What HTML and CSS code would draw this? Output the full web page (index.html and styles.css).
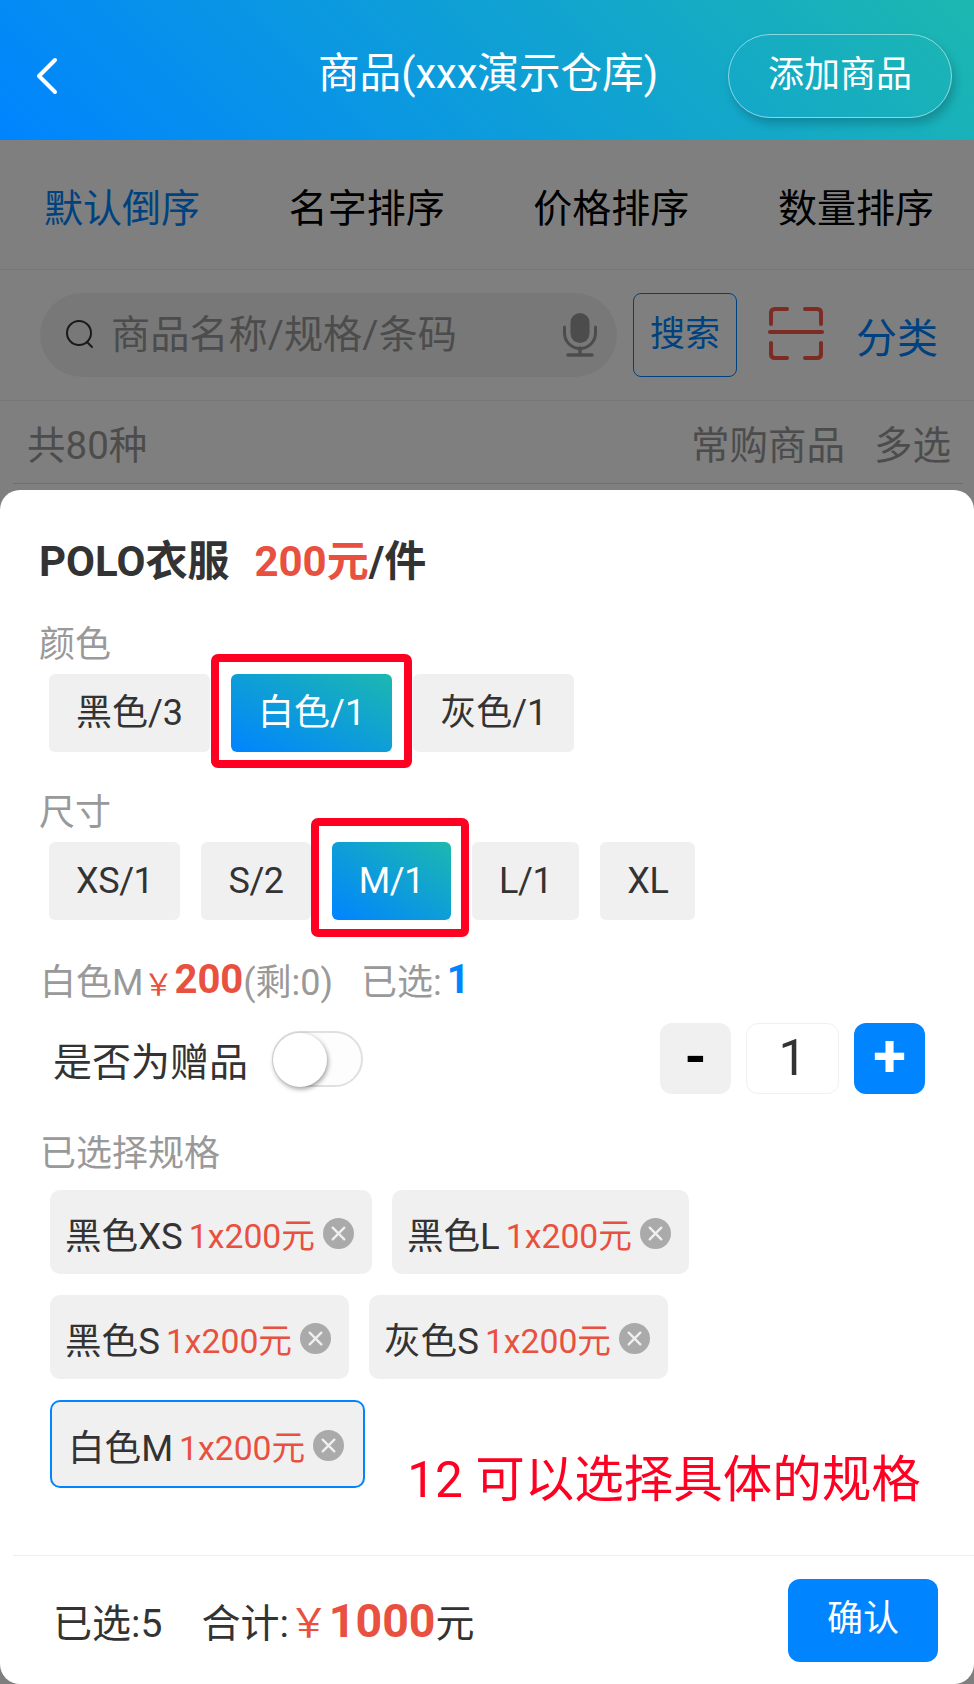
FILE: index.html
```html
<!DOCTYPE html>
<html lang="zh">
<head>
    <meta charset="UTF-8">
    <meta name="viewport" content="width=device-width, initial-scale=1.0">
    <title>商品</title>
    <link rel="stylesheet" href="styles.css">
</head>
<body>
    <div class="page">
        <div class="header">
            <svg class="back-icon" viewBox="0 0 26 38"><path d="M21 3 L5 19 L21 35" fill="none" stroke="#fff" stroke-width="4" stroke-linecap="round" stroke-linejoin="round"/></svg>
            <div class="header-title">商品(xxx演示仓库)</div>
            <div class="add-btn">添加商品</div>
        </div>

        <div class="sort-row">
            <span class="sort-item active">默认倒序</span>
            <span class="sort-item">名字排序</span>
            <span class="sort-item">价格排序</span>
            <span class="sort-item">数量排序</span>
        </div>

        <div class="search-row">
            <div class="search-box">
                <svg class="search-icon" viewBox="0 0 30 30"><circle cx="13" cy="13" r="12" fill="none" stroke="#333" stroke-width="2"/><path d="M21 22 L26 27" stroke="#333" stroke-width="2" stroke-linecap="round"/></svg>
                <span class="search-text">商品名称/规格/条码</span>
                <svg class="mic-icon" viewBox="0 0 34 44"><rect x="7.5" y="0" width="19" height="30" rx="9.5" fill="#999"/><path d="M1.5 14 V20 A15.5 15.5 0 0 0 32.5 20 V14" fill="none" stroke="#999" stroke-width="3" stroke-linecap="round"/><path d="M17 35 V42 M5 42 H29" stroke="#999" stroke-width="3.4" stroke-linecap="round"/></svg>
            </div>
            <div class="search-btn">搜索</div>
            <svg class="scan-icon" viewBox="0 0 56 53"><path d="M19 2 H7 Q3 2 3 6 V17 M37 2 H49 Q53 2 53 6 V17 M19 51 H7 Q3 51 3 47 V36 M37 51 H49 Q53 51 53 47 V36" fill="none" stroke="#f9564a" stroke-width="4" stroke-linecap="round"/><path d="M2 25 H54" stroke="#f9564a" stroke-width="4" stroke-linecap="round"/></svg>
            <span class="category">分类</span>
        </div>

        <div class="count-row">
            <span>共80种</span>
            <span class="count-links"><span>常购商品</span><span>多选</span></span>
        </div>

        <div class="mask"></div>

        <div class="sheet">
            <div class="goods-title">POLO衣服<span class="red title-price">200元</span>/件</div>

            <div class="spec-label">颜色</div>
            <div class="spec-row">
                <span class="spec">黑色/3</span>
                <span class="spec selected">白色/1<i class="mark mark-color"></i></span>
                <span class="spec">灰色/1</span>
            </div>

            <div class="spec-label size-label">尺寸</div>
            <div class="spec-row size-row">
                <span class="spec">XS/1</span>
                <span class="spec">S/2</span>
                <span class="spec selected">M/1<i class="mark mark-size"></i></span>
                <span class="spec">L/1</span>
                <span class="spec">XL</span>
            </div>

            <div class="stock-line">白色M<span class="red yen">￥</span><b class="red">200</b>(剩:0)<span class="picked">已选:</span><b class="blue picked-num">1</b></div>

            <div class="gift-row">
                <span class="gift-label">是否为赠品</span>
                <span class="switch"><i class="knob"></i></span>
                <div class="stepper">
                    <span class="step minus">-</span>
                    <span class="step-value">1</span>
                    <span class="step plus">+</span>
                </div>
            </div>

            <div class="spec-label chosen-label">已选择规格</div>
            <div class="chosen-list">
                <div class="chosen-row">
                    <span class="tag">黑色XS<span class="red tag-price">1x200元</span><svg class="tag-close" viewBox="0 0 32 32"><circle cx="16" cy="16" r="16" fill="#aaa"/><path d="M10 10 L22 22 M22 10 L10 22" stroke="#f0f0f0" stroke-width="2.4" stroke-linecap="round"/></svg></span>
                    <span class="tag">黑色L<span class="red tag-price">1x200元</span><svg class="tag-close" viewBox="0 0 32 32"><circle cx="16" cy="16" r="16" fill="#aaa"/><path d="M10 10 L22 22 M22 10 L10 22" stroke="#f0f0f0" stroke-width="2.4" stroke-linecap="round"/></svg></span>
                </div>
                <div class="chosen-row">
                    <span class="tag">黑色S<span class="red tag-price">1x200元</span><svg class="tag-close" viewBox="0 0 32 32"><circle cx="16" cy="16" r="16" fill="#aaa"/><path d="M10 10 L22 22 M22 10 L10 22" stroke="#f0f0f0" stroke-width="2.4" stroke-linecap="round"/></svg></span>
                    <span class="tag">灰色S<span class="red tag-price">1x200元</span><svg class="tag-close" viewBox="0 0 32 32"><circle cx="16" cy="16" r="16" fill="#aaa"/><path d="M10 10 L22 22 M22 10 L10 22" stroke="#f0f0f0" stroke-width="2.4" stroke-linecap="round"/></svg></span>
                </div>
                <div class="chosen-row">
                    <span class="tag current">白色M<span class="red tag-price">1x200元</span><svg class="tag-close" viewBox="0 0 32 32"><circle cx="16" cy="16" r="16" fill="#aaa"/><path d="M10 10 L22 22 M22 10 L10 22" stroke="#f0f0f0" stroke-width="2.4" stroke-linecap="round"/></svg></span>
                    <span class="note">12 可以选择具体的规格</span>
                </div>
            </div>

            <div class="footer">
                <span class="footer-count">已选:5</span>
                <span class="footer-total">合计:<span class="red total-yen">￥</span><b class="red">1000</b>元</span>
                <span class="confirm">确认</span>
            </div>
        </div>
    </div>
</body>
</html>
```

FILE: styles.css
```css
* {
    box-sizing: border-box;
}
body {
    margin: 0;
    background-color: #fff;
    color: #333;
    font-family: Roboto, "Noto Sans CJK SC", sans-serif;
    overflow: hidden;
}
.page {
    position: relative;
    width: 974px;
    height: 1684px;
    overflow: hidden;
}
.red {
    color: #e8503f;
}
.blue {
    color: #0084ff;
}

/* header */
.header {
    position: relative;
    z-index: 2;
    height: 140px;
    padding: 34px 22px 0 34px;
    display: flex;
    align-items: flex-start;
    background: linear-gradient(45deg, #0084ff, #1cb8b0);
    color: #fff;
}
.back-icon {
    width: 26px;
    height: 38px;
    margin-top: 23px;
}
.header-title {
    margin-left: 258px;
    font-size: 41.6px;
    line-height: 80px;
    white-space: nowrap;
}
.add-btn {
    width: 224px;
    height: 84px;
    margin-left: auto;
    border: 1px solid rgba(255, 255, 255, 0.5);
    border-radius: 42px;
    box-shadow: 3px 6px 10px rgba(0, 0, 0, 0.2);
    font-size: 36px;
    line-height: 80px;
    text-align: center;
}

/* behind the mask */
.sort-row {
    height: 130px;
    padding: 0 40px 0 44px;
    display: flex;
    justify-content: space-between;
    align-items: center;
    border-bottom: 1px solid #eee;
    font-size: 39px;
    color: #000;
}
.sort-item.active {
    color: #0084ff;
}
.search-row {
    height: 131px;
    padding-left: 40px;
    display: flex;
    align-items: center;
    border-bottom: 1px solid #eee;
}
.search-box {
    width: 577px;
    height: 84px;
    padding: 0 20px 0 26px;
    display: flex;
    align-items: center;
    border-radius: 42px;
    background: #f1f1f1;
}
.search-icon {
    width: 30px;
    height: 30px;
}
.search-text {
    margin-left: 15px;
    padding-bottom: 8px;
    font-size: 39.2px;
    color: #999;
}
.mic-icon {
    width: 34px;
    height: 44px;
    margin-left: auto;
}
.search-btn {
    width: 104px;
    height: 84px;
    margin-left: 16px;
    border: 1px solid #0084ff;
    border-radius: 8px;
    font-size: 35px;
    line-height: 82px;
    text-align: center;
    color: #0084ff;
}
.scan-icon {
    width: 56px;
    height: 53px;
    margin: 0 0 4px 31px;
}
.category {
    margin-left: 32px;
    font-size: 41px;
    color: #0084ff;
}
.count-row {
    height: 83px;
    margin: 0 11px 0 13px;
    padding: 0 12px 0 14px;
    display: flex;
    justify-content: space-between;
    align-items: center;
    border-bottom: 1px solid #ddd;
    font-size: 38.5px;
    color: #999;
}
.count-links {
    display: flex;
    gap: 29px;
}
.mask {
    position: absolute;
    top: 0;
    left: 0;
    right: 0;
    bottom: 0;
    z-index: 1;
    background: rgba(0, 0, 0, 0.5);
}

/* bottom sheet */
.sheet {
    position: absolute;
    top: 490px;
    left: 0;
    right: 0;
    bottom: 0;
    z-index: 2;
    padding: 45px 40px 0;
    border-radius: 20px;
    background: #fff;
}
.goods-title {
    margin-left: -1px;
    font-size: 42px;
    line-height: 54px;
    font-weight: bold;
    white-space: nowrap;
}
.title-price {
    margin-left: 25px;
}
.spec-label {
    margin: 34px 0 0 -1px;
    font-size: 36px;
    line-height: 44px;
    color: #999;
}
.spec-row {
    display: flex;
    gap: 21px;
    margin: 7px 0 0 9px;
}
.size-row {
    letter-spacing: -0.4px;
}
.spec {
    position: relative;
    height: 78px;
    padding: 0 27px;
    border-radius: 6px;
    background: #f0f0f0;
    font-size: 36px;
    line-height: 78px;
    white-space: nowrap;
}
.spec.selected {
    background: linear-gradient(to top right, #0084ff, #1cb8b0);
    color: #fff;
}
.size-label {
    margin-top: 39px;
}
.mark {
    position: absolute;
    border: 8px solid #ff0022;
    border-radius: 7px;
}
.mark-color {
    top: -20px;
    bottom: -16px;
    left: -20px;
    right: -20px;
}
.mark-size {
    top: -24px;
    bottom: -17px;
    left: -21px;
    right: -18px;
}
.stock-line {
    margin-top: 30px;
    font-size: 36px;
    line-height: 60px;
    color: #999;
    white-space: nowrap;
}
.stock-line b {
    font-size: 40px;
    vertical-align: 2px;
}
.yen {
    margin-right: 1px;
    font-size: 30px;
}
.picked {
    margin-left: 28px;
}
.picked-num {
    margin-left: 5px;
}
.gift-row {
    height: 71px;
    margin-top: 8px;
    padding: 0 9px 0 13px;
    display: flex;
    align-items: center;
}
.gift-label {
    font-size: 39px;
}
.switch {
    position: relative;
    width: 91px;
    height: 56px;
    margin-left: 24px;
    border: 2px solid #e0e0e0;
    border-radius: 28px;
    background: #fdfdfd;
}
.knob {
    position: absolute;
    top: 0;
    left: -1px;
    width: 54px;
    height: 54px;
    border-radius: 50%;
    background: #fff;
    box-shadow: 1px 2px 5px rgba(0, 0, 0, 0.4);
}
.stepper {
    margin-left: auto;
    display: flex;
    gap: 15px;
}
.step,
.step-value {
    height: 71px;
    border-radius: 12px;
    text-align: center;
}
.step {
    width: 71px;
    font-weight: bold;
}
.minus {
    background: #f0f0f0;
    color: #000;
    font-size: 56px;
    line-height: 68px;
}
.plus {
    background: #0084ff;
    color: #fff;
    font-size: 60px;
    line-height: 66px;
}
.step-value {
    width: 93px;
    border: 1px solid #f0f0f0;
    font-size: 50px;
    line-height: 68px;
}
.chosen-label {
    margin: 38px 0 0;
}
.chosen-list {
    margin: 14px 0 0 10px;
    display: flex;
    flex-direction: column;
    gap: 21px;
}
.chosen-row {
    display: flex;
    gap: 20px;
}
.tag {
    height: 84px;
    padding: 3px 18px 0 15px;
    display: flex;
    align-items: center;
    border-radius: 10px;
    background: #f0f0f0;
    font-size: 36.6px;
    white-space: nowrap;
}
.tag.current {
    height: 88px;
    padding: 3px 19px 0 16px;
    border: 2px solid #0084ff;
}
.tag-price {
    margin-left: 6px;
    font-size: 33.7px;
}
.tag-close {
    width: 31px;
    height: 31px;
    margin-left: 8px;
}
.note {
    margin: 50px 0 0 22px;
    font-size: 49.5px;
    line-height: 60px;
    color: #ff0022;
    white-space: nowrap;
}
.footer {
    position: absolute;
    left: 13px;
    right: 0;
    bottom: 0;
    height: 129px;
    padding: 0 36px 0 40px;
    display: flex;
    align-items: center;
    border-top: 1px solid #eee;
    font-size: 39px;
}
.footer b {
    font-size: 46.5px;
}
.footer-total {
    margin-left: 39px;
}
.total-yen {
    font-size: 40px;
}
.confirm {
    width: 150px;
    height: 83px;
    margin-left: auto;
    border-radius: 12px;
    background: #0084ff;
    color: #fff;
    font-size: 36px;
    line-height: 80px;
    text-align: center;
}
```
